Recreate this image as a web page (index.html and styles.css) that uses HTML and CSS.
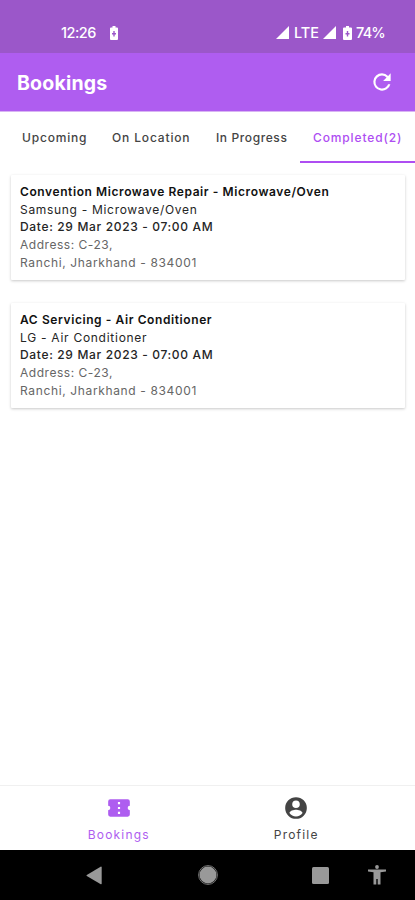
FILE: index.html
```html
<!DOCTYPE html>
<html lang="en">
<head>
<meta charset="utf-8">
<title>Bookings</title>
<link rel="stylesheet" href="styles.css">
</head>
<body>
<div class="app">
  <div class="status">
    <span class="clock">12:26</span>
    <svg class="battery-left" width="8" height="14" viewBox="0 0 8 14"><path fill="#fff" fill-rule="evenodd" d="M2.5 0h3v1.500H7q1 0 1 1V13q0 1-1 1H1q-1 0-1-1V2.500q0-1 1-1h1.500zM3.300 5v2H2v1.500h1.300v2h1.400v-2H6V7H4.700V5z"/></svg>
    <svg class="signal" width="13" height="13" viewBox="0 0 13 13"><path fill="#fff" d="M13 0v13H0z"/></svg>
    <span class="lte">LTE</span>
    <svg class="signal" width="13" height="13" viewBox="0 0 13 13"><path fill="#fff" d="M13 0v13H0z"/></svg>
    <svg class="battery-right" width="9" height="14" viewBox="0 0 9 14"><path fill="#fff" fill-rule="evenodd" d="M3 0h3v1.500h2q1 0 1 1V13q0 1-1 1H1q-1 0-1-1V2.500q0-1 1-1h2zM3.800 5v2H2.500v1.500h1.300v2h1.400v-2h1.300V7H5.200V5z"/></svg>
    <span class="percent">74%</span>
  </div>
  <header class="header">
    <h1>Bookings</h1>
    <svg width="26" height="26" viewBox="0 0 24 24"><path fill="#fff" d="M17.650 6.350A7.960 7.960 0 0 0 12 4a8 8 0 1 0 7.730 10h-2.080A6 6 0 1 1 12 6c1.660 0 3.140.69 4.220 1.780L13 11h7V4z"/></svg>
  </header>
  <nav class="tabs">
    <span class="tab upcoming">Upcoming</span>
    <span class="tab location">On Location</span>
    <span class="tab progress">In Progress</span>
    <span class="tab completed">Completed(2)</span>
  </nav>
  <main class="list">
    <article class="card">
      <h2 class="t-repair">Convention Microwave Repair - Microwave/Oven</h2>
      <p class="t-samsung">Samsung - Microwave/Oven</p>
      <p class="t-date">Date: 29 Mar 2023 - 07:00 AM</p>
      <p class="muted t-address">Address: C-23,</p>
      <p class="muted t-city">Ranchi, Jharkhand - 834001</p>
    </article>
    <article class="card">
      <h2 class="t-ac">AC Servicing - Air Conditioner</h2>
      <p class="t-lg">LG - Air Conditioner</p>
      <p class="t-date">Date: 29 Mar 2023 - 07:00 AM</p>
      <p class="muted t-address">Address: C-23,</p>
      <p class="muted t-city">Ranchi, Jharkhand - 834001</p>
    </article>
  </main>
  <nav class="bottom">
    <div class="item active">
      <svg width="26" height="26" viewBox="0 0 24 24"><path fill="currentColor" d="M22 10V6a2 2 0 0 0-2-2H4a2 2 0 0 0-2 2v4a2 2 0 0 1 0 4v4a2 2 0 0 0 2 2h16a2 2 0 0 0 2-2v-4a2 2 0 0 1 0-4zm-9 7.500h-2v-2h2zm0-4.500h-2v-2h2zm0-4.500h-2v-2h2z"/></svg>
      <span>Bookings</span>
    </div>
    <div class="item">
      <svg width="26" height="26" viewBox="0 0 24 24"><path fill="currentColor" d="M12 2a10 10 0 1 0 0 20 10 10 0 0 0 0-20zm0 3a3.500 3.500 0 1 1 0 7 3.500 3.500 0 0 1 0-7zm0 14.800a7.200 7.200 0 0 1-6-3.220c.03-1.990 4-3.080 6-3.080s5.970 1.090 6 3.080a7.200 7.200 0 0 1-6 3.220z"/></svg>
      <span>Profile</span>
    </div>
  </nav>
  <div class="system">
    <svg class="back" width="16" height="19" viewBox="0 0 16 19"><path fill="#999" d="M15 .5q.7 0 .7 1v16q0 1-.9.700L.8 10q-.8-.5 0-1z"/></svg>
    <svg class="home" width="20" height="20" viewBox="0 0 20 20"><circle cx="10" cy="10" r="9.400" fill="none" stroke="#777"/><circle cx="10" cy="10" r="8.500" fill="#999"/></svg>
    <svg class="recent" width="17" height="17" viewBox="0 0 17 17"><rect width="17" height="17" rx="1.500" fill="#999"/></svg>
    <svg class="access" width="18" height="20" viewBox="0 0 18 20"><path fill="#999" d="M0 4.500h18v2l-5.500.7V19.500H9.700V14H8.300v5.500H5.500V7.200L0 6.500z"/><circle cx="9" cy="2" r="1.900" fill="#999"/></svg>
  </div>
</div>
</body>
</html>
```

FILE: styles.css
```css
* { box-sizing: border-box; }
body { margin: 0; background: #fff; font-family: Inter, "Liberation Sans", sans-serif; }
h1, h2, p { margin: 0; }
svg { display: block; flex: none; }
.app { width: 415px; height: 900px; display: flex; flex-direction: column; overflow: hidden; }
.status { height: 53px; flex: none; background: #9b57c9; color: #fff; display: flex; align-items: center; padding: 12px 0 0 61px; font-size: 14.500px; font-weight: 500; white-space: nowrap; }
.clock { width: 49px; letter-spacing: -0.5px; }
.battery-left { margin-right: 158px; }
.lte { width: 29px; margin-left: 5px; }
.battery-right { margin: 0 4px 0 7px; }
.percent { letter-spacing: -0.8px; }
.header { height: 58px; flex: none; background: #af5df0; color: #fff; display: flex; align-items: center; justify-content: space-between; padding: 0 20px 0 17px; }
.header h1 { font-size: 19.500px; font-weight: 700; letter-spacing: .2px; padding-top: 2px; }
.tabs { height: 52px; flex: none; border-top: 1px solid #d8b4f3; display: grid; grid-template-columns: 100px 103px 97px 115px; font-size: 12px; font-weight: 500; color: #444; }
.tab { line-height: 52px; height: 51px; padding-left: 12px; white-space: nowrap; }
.upcoming { padding-left: 22px; letter-spacing: .8px; }
.location { letter-spacing: .85px; }
.progress { padding-left: 13px; letter-spacing: .6px; }
.completed { padding-left: 13px; letter-spacing: .87px; color: #ae4df2; border-bottom: 2px solid #ae4df2; }
.list { flex: 1; padding: 12px 10px 0 11px; display: flex; flex-direction: column; gap: 23px; }
.card { height: 105px; padding: 8px 9px; background: #fff; box-shadow: 0 1px 3px rgba(0,0,0,.22); border-radius: 1px; font-size: 12px; line-height: 17.700px; color: #252525; white-space: nowrap; }
.card h2 { font-size: 12px; font-weight: 600; line-height: 17.700px; color: #111; }
.t-repair { letter-spacing: .59px; }
.t-samsung { letter-spacing: .69px; }
.t-date { font-weight: 500; letter-spacing: .66px; }
.t-address { letter-spacing: .53px; }
.t-city { letter-spacing: .64px; }
.t-ac { letter-spacing: .59px; }
.t-lg { letter-spacing: .73px; }
.card .muted { color: #666; }
.bottom { height: 65px; flex: none; border-top: 1px solid #f0f0f0; padding: 0 30px; display: grid; grid-template-columns: 1fr 1fr; color: #444; }
.item { display: flex; flex-direction: column; align-items: center; padding-top: 9px; font-size: 12px; line-height: 16px; letter-spacing: 1.200px; }
.item svg { margin-bottom: 6px; }
.active { color: #ae5df0; }
.system { height: 50px; flex: none; background: #000; display: flex; align-items: center; padding-left: 86px; }
.home { margin-left: 96px; }
.recent { margin-left: 94px; }
.access { margin-left: 39px; }
```
